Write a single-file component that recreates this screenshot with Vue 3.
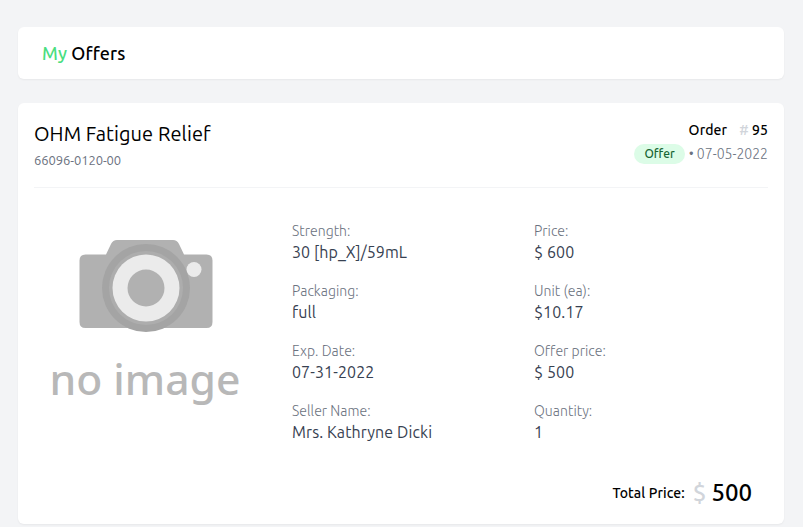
<script setup>
const columns = [
  [
    { label: 'Strength:', value: '30 [hp_X]/59mL' },
    { label: 'Packaging:', value: 'full' },
    { label: 'Exp. Date:', value: '07-31-2022' },
    { label: 'Seller Name:', value: 'Mrs. Kathryne Dicki' },
  ],
  [
    { label: 'Price:', value: '$ 600' },
    { label: 'Unit (ea):', value: '$10.17' },
    { label: 'Offer price:', value: '$ 500' },
    { label: 'Quantity:', value: '1' },
  ],
]
</script>

<template>
  <main class="page">
    <header class="card heading">
      <h1><span class="accent">My</span> Offers</h1>
    </header>

    <article class="card offer">
      <div class="top">
        <div>
          <h2>OHM Fatigue Relief</h2>
          <p class="code">66096-0120-00</p>
        </div>
        <div class="meta">
          <p class="order"><span>Order</span><span><span class="muted">#</span> 95</span></p>
          <p class="status"><span class="badge">Offer</span><span class="date">• 07-05-2022</span></p>
        </div>
      </div>

      <div class="body">
        <svg class="photo" viewBox="0 0 224 224" role="img">
          <path d="M45.500 46.500H72L77 36Q79 32 83 32H139Q143 32 145 36L150 46.500H172.500Q178.500 46.500 178.500 52.500V114Q178.500 120 172.500 120H51.500Q45.500 120 45.500 114V52.500Q45.500 46.500 51.500 46.500Z" fill="#b1b1b1" />
          <circle cx="112" cy="80" r="44" fill="#a4a4a4" />
          <circle cx="112" cy="80" r="37" fill="#adadad" />
          <circle cx="112" cy="80" r="33.500" fill="#ebebeb" />
          <circle cx="112" cy="80" r="18.500" fill="#b1b1b1" />
          <circle cx="160" cy="61.500" r="7.500" fill="#ebebeb" />
          <text x="15.500" y="187" textLength="191" lengthAdjust="spacingAndGlyphs">no image</text>
        </svg>
        <dl v-for="(column, i) in columns" :key="i" class="column">
          <div v-for="field in column" :key="field.label" class="field">
            <dt>{{ field.label }}</dt>
            <dd>{{ field.value }}</dd>
          </div>
        </dl>
      </div>

      <div class="total">
        <span class="total-label">Total Price:</span>
        <span class="muted currency">$</span>
        <span class="amount">500</span>
      </div>
    </article>
  </main>
</template>

<style>
body {
  background: #f3f4f6;
}
</style>

<style scoped>
.page {
  box-sizing: border-box;
  height: 527px;
  padding: 27px 19px 3px 18px;
  overflow: hidden;
  display: flex;
  flex-direction: column;
  gap: 24px;
  font-family: Ubuntu, "Noto Sans", sans-serif;
  color: #000;
}
h1, h2, p, dl, dd {
  margin: 0;
}
.card {
  box-sizing: border-box;
  background: #fff;
  border-radius: 6px;
  box-shadow: 0 1px 2px rgba(0, 0, 0, 0.05);
}
.heading {
  height: 52px;
  padding: 12px 24px;
}
h1 {
  font-size: 18px;
  line-height: 28px;
  font-weight: 500;
  letter-spacing: 0.1px;
}
.accent {
  color: #4ade80;
}
.offer {
  height: 421px;
  padding: 16px;
}
.top {
  box-sizing: border-box;
  height: 69px;
  display: flex;
  justify-content: space-between;
  border-bottom: 1px solid #f3f4f6;
}
h2 {
  font-size: 20px;
  line-height: 30px;
  font-weight: 400;
  letter-spacing: 0.1px;
}
.code {
  margin-top: 3px;
  font-size: 13px;
  line-height: 16px;
  letter-spacing: -0.08px;
  color: #6b7280;
}
.meta {
  display: flex;
  flex-direction: column;
  align-items: flex-end;
}
.order {
  display: flex;
  gap: 12px;
  margin-top: 1px;
  font-size: 14px;
  line-height: 20px;
  font-weight: 500;
  letter-spacing: 0.1px;
}
.muted {
  color: #d1d5db;
}
.status {
  display: flex;
  align-items: center;
  gap: 4px;
  margin-top: 4px;
  font-size: 14px;
  line-height: 20px;
  color: #6b7280;
}
.badge {
  padding: 0 10px;
  border-radius: 10px;
  background: #dcfce7;
  color: #166534;
  font-size: 12px;
  font-weight: 500;
}
.date {
  font-weight: 300;
}
.body {
  display: grid;
  grid-template-columns: 224px 242px 1fr;
  height: 273px;
}
.photo {
  width: 224px;
  height: 224px;
  margin-top: 20px;
}
.photo text {
  font-family: "Noto Sans", sans-serif;
  font-size: 42px;
  font-weight: 500;
  fill: #b8b8b8;
}
.column {
  padding: 33px 0 0 34px;
}
.field {
  height: 60px;
}
dt {
  font-size: 14px;
  line-height: 20px;
  font-weight: 300;
  letter-spacing: 0.05px;
  color: #6b7280;
}
dd {
  font-size: 16px;
  line-height: 22px;
  letter-spacing: 0.1px;
  color: #374151;
}
.total {
  display: flex;
  align-items: center;
  justify-content: flex-end;
  height: 32px;
  margin-top: 15px;
  padding-right: 16px;
  font-weight: 500;
}
.total-label {
  padding-top: 1px;
  font-size: 14px;
  line-height: 20px;
  letter-spacing: 0.1px;
}
.currency {
  margin-left: 8px;
  font-size: 24px;
}
.amount {
  margin-left: 5px;
  font-size: 24px;
}
</style>
